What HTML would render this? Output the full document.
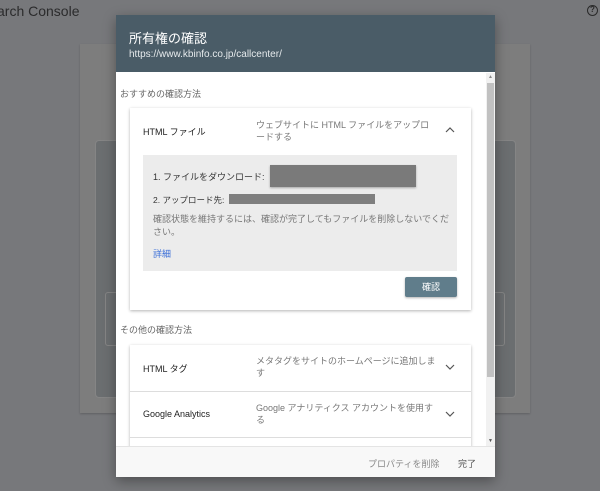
<!DOCTYPE html>
<html><head><meta charset="utf-8"><style>
*{margin:0;padding:0;box-sizing:border-box}
body{width:600px;height:491px;background:#77787b;position:relative;overflow:hidden;font-family:"Liberation Sans","Noto Sans CJK JP",sans-serif}
.a{position:absolute}
.chev{position:absolute;left:315px;width:10px;height:6px}
</style></head><body>
<div class="a" style="top:3px;font-size:14px;color:#2b2b2c;left:-3px">arch Console</div>
<div class="a" style="left:587px;top:5px;width:11px;height:11px;border:1.5px solid #2a2a2a;border-radius:50%;font-size:8px;line-height:8px;text-align:center;color:#2a2a2a;font-weight:bold">?</div>
<div class="a" style="left:80px;top:44px;width:450px;height:369px;background:#7d7d7d;box-shadow:0 1px 2px rgba(0,0,0,.2)"></div>
<div class="a" style="left:95px;top:140px;width:421px;height:258px;background:#6b6e70;border:1px solid #858585;border-radius:4px"></div>
<div class="a" style="left:105px;top:292px;width:400px;height:54px;border:1px solid #858585;border-radius:3px"></div>
<div class="a" style="left:116px;top:15px;width:379px;height:462px;background:#fff;box-shadow:0 4px 12px rgba(0,0,0,.35)">
 <div class="a" style="left:0;top:0;width:379px;height:57px;background:#4a5c67"></div>
 <div class="a" style="left:13px;top:13px;font-size:13px;color:#fff">所有権の確認</div>
 <div class="a" style="left:13px;top:34px;font-size:10px;color:#e6eaec">https://www.kbinfo.co.jp/callcenter/</div>
 <div class="a" style="left:370px;top:58px;width:9px;height:373px;background:#f1f1f1"></div>
 <div class="a" style="left:371px;top:68px;width:7px;height:294px;background:#c1c1c1"></div>
 <div class="a" style="left:372px;top:59px;font-size:5px;color:#888">▲</div>
 <div class="a" style="left:372px;top:423px;font-size:5px;color:#555">▼</div>
 <div class="a" style="left:4px;top:72px;font-size:9px;color:#666">おすすめの確認方法</div>
 <div class="a" style="left:14px;top:93px;width:341px;height:202px;background:#fff;box-shadow:0 1px 3px rgba(0,0,0,.3)">
  <div class="a" style="left:13px;top:17px;font-size:9px;color:#222">HTML ファイル</div>
  <div class="a" style="left:126px;top:11px;width:182px;font-size:9px;line-height:12px;color:#777">ウェブサイトに HTML ファイルをアップロードする</div>
  <svg class="chev" style="top:19px" viewBox="0 0 10 6"><path d="M1 5L5 1L9 5" fill="none" stroke="#555" stroke-width="1.2"/></svg>
  <div class="a" style="left:13px;top:47px;width:314px;height:116px;background:#ececec">
   <div class="a" style="left:10px;top:15px;font-size:9px;color:#333">1. ファイルをダウンロード:</div>
   <div class="a" style="left:127px;top:10px;width:146px;height:22px;background:#7a7a7a;box-shadow:0 1px 2px rgba(0,0,0,.3)"></div>
   <div class="a" style="left:10px;top:39px;font-size:8.5px;color:#333">2. アップロード先:</div>
   <div class="a" style="left:86px;top:39px;width:146px;height:10px;background:#7f7f7f"></div>
   <div class="a" style="left:10px;top:58px;width:300px;font-size:9px;line-height:13px;color:#777">確認状態を維持するには、確認が完了してもファイルを削除しないでください。</div>
   <div class="a" style="left:10px;top:92px;font-size:9px;color:#3b6fd8">詳細</div>
  </div>
  <div class="a" style="left:275px;top:169px;width:52px;height:20px;background:#607d8b;color:#fff;font-size:9px;line-height:20px;text-align:center;border-radius:2px;box-shadow:0 1px 2px rgba(0,0,0,.3)">確認</div>
 </div>
 <div class="a" style="left:4px;top:308px;font-size:9px;color:#666">その他の確認方法</div>
 <div class="a" style="left:14px;top:330px;width:341px;height:110px;background:#fff;box-shadow:0 1px 3px rgba(0,0,0,.3)">
  <div class="a" style="left:13px;top:17px;font-size:9px;color:#222">HTML タグ</div>
  <div class="a" style="left:126px;top:10px;width:182px;font-size:9px;line-height:12px;color:#777">メタタグをサイトのホームページに追加します</div>
  <svg class="chev" style="top:19px" viewBox="0 0 10 6"><path d="M1 1L5 5L9 1" fill="none" stroke="#555" stroke-width="1.2"/></svg>
  <div class="a" style="left:0;top:46px;width:341px;height:1px;background:#ddd"></div>
  <div class="a" style="left:13px;top:64px;font-size:9px;color:#222">Google Analytics</div>
  <div class="a" style="left:126px;top:57px;width:182px;font-size:9px;line-height:12px;color:#777">Google アナリティクス アカウントを使用する</div>
  <svg class="chev" style="top:66px" viewBox="0 0 10 6"><path d="M1 1L5 5L9 1" fill="none" stroke="#555" stroke-width="1.2"/></svg>
  <div class="a" style="left:0;top:92px;width:341px;height:1px;background:#ddd"></div>
 </div>
 <div class="a" style="left:0;top:431px;width:379px;height:31px;background:#f8f8f8;border-top:1px solid #e4e4e4">
  <div class="a" style="left:252px;top:10px;font-size:9px;color:#888">プロパティを削除</div>
  <div class="a" style="left:342px;top:10px;font-size:9px;color:#555">完了</div>
 </div>
</div>
</body></html>
